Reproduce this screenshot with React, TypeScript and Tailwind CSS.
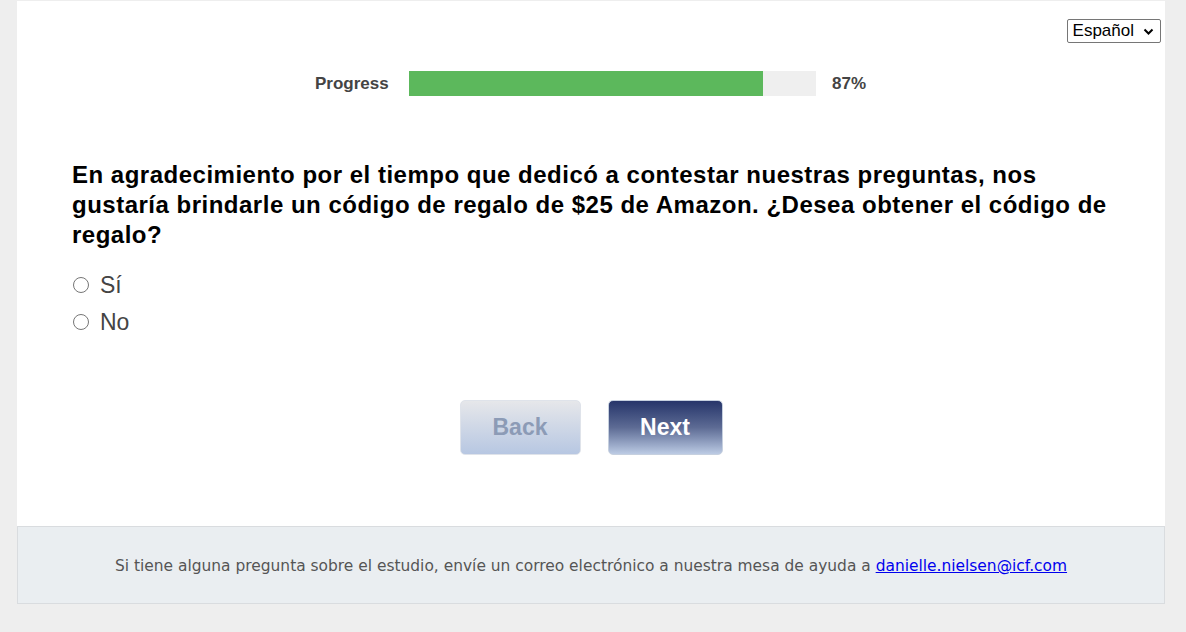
export default function App() {
  return (
    <div className="min-h-[632px] bg-[#eeeeee] font-['Liberation_Sans',Arial,sans-serif]">
      <div className="ml-[17px] mr-[21px] pt-px">
        {/* Main card */}
        <div className="bg-white h-[525px] flex flex-col">
          <div className="flex justify-end pt-[18px] pr-[4px]">
            <div className="flex items-center gap-[9px] h-[24px] pl-[5px] pr-[6px] border border-[#767676] rounded-[2px] text-[17px] text-black">
              <span>Español</span>
              <svg width="11" height="8" viewBox="0 0 11 8" className="mt-px">
                <path d="M1.5 1.5 L5.5 5.5 L9.5 1.5" fill="none" stroke="#000" strokeWidth="2" />
              </svg>
            </div>
          </div>

          {/* Progress */}
          <div className="flex items-center mt-[28px] pl-[298px] h-[25px]">
            <span className="w-[94px] text-[17px] font-bold text-[#444]">Progress</span>
            <div className="w-[407px] h-[25px] bg-[#efefef]">
              <div className="h-full bg-[#5cb85c]" style={{ width: "87%" }} />
            </div>
            <span className="ml-[16px] text-[17px] font-bold text-[#444]">87%</span>
          </div>

          {/* Question */}
          <div className="pl-[55px] pr-[44px] mt-[64px]">
            <p className="text-[24px] leading-[30px] tracking-[0.5px] font-bold text-black">
              En agradecimiento por el tiempo que dedicó a contestar nuestras preguntas, nos gustaría brindarle un código de regalo de $25 de Amazon. ¿Desea obtener el código de regalo?
            </p>
            <div className="mt-[22px] flex flex-col gap-[11px]">
              {["Sí", "No"].map((o) => (
                <label key={o} className="flex items-center h-[26px] text-[23px] text-[#444]">
                  <span className="ml-[1px] w-[16px] h-[16px] rounded-full border border-[#767676]" />
                  <span className="ml-[11px]">{o}</span>
                </label>
              ))}
            </div>
          </div>

          {/* Buttons */}
          <div className="flex justify-center gap-[27px] mt-[65px]">
            <button className="w-[121px] h-[55px] rounded-[5px] border border-[#dfe3ea] bg-gradient-to-b from-[#e6e7ea] to-[#b7c7e2] text-[23px] font-bold text-[#8c9bb6]">
              Back
            </button>
            <button className="w-[115px] h-[55px] rounded-[5px] border border-[#c6d0df] bg-gradient-to-b from-[#27356a] via-[#5d6b94] to-[#bccbe4] text-[23px] font-bold text-white">
              Next
            </button>
          </div>
        </div>

        {/* Footer */}
        <div className="h-[78px] pt-[3px] bg-[#eaeef1] border border-[#d9dcdf] flex items-center justify-center font-['DejaVu_Sans',Tahoma,sans-serif] text-[15.45px] text-[#555]">
          <span>
            Si tiene alguna pregunta sobre el estudio, envíe un correo electrónico a nuestra mesa de ayuda a{" "}
            <a href="#" className="text-[#0000ee] underline">danielle.nielsen@icf.com</a>
          </span>
        </div>
      </div>
    </div>
  );
}
